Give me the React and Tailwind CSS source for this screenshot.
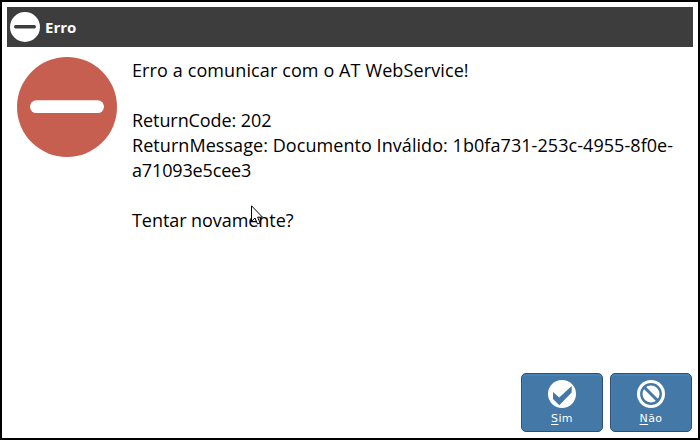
const lines = [
  { text: "Erro a comunicar com o AT WebService!", tracking: "tracking-[0.11px]" },
  { text: "\u00a0", tracking: "" },
  { text: "ReturnCode: 202", tracking: "tracking-[-0.08px]" },
  { text: "ReturnMessage: Documento Inválido: 1b0fa731-253c-4955-8f0e-", tracking: "tracking-[0.06px]" },
  { text: "a71093e5cee3", tracking: "tracking-[-0.15px]" },
  { text: "\u00a0", tracking: "" },
  { text: "Tentar novamente?", tracking: "tracking-[-0.06px]" },
];

function DialogButton({ accessKey, rest, children }) {
  return (
    <button className="flex h-[59px] w-[82px] flex-col items-center rounded-[5px] border border-[#2d506f] bg-[#4478a7] pt-[6px] shadow-[inset_0_2px_1px_#4383b8,inset_1px_0_1px_#4383b8] text-white">
      <svg width="28" height="28" viewBox="0 0 28 28">{children}</svg>
      <span className="mt-[3px] font-['DejaVu_Sans',sans-serif] text-[11px] leading-[15px] tracking-[0.4px]">
        <span className="underline decoration-1 underline-offset-2">{accessKey}</span>
        {rest}
      </span>
    </button>
  );
}

export default function App() {
  return (
    <div className="relative flex h-[440px] w-[700px] flex-col border-2 border-black bg-white px-[5px] pt-[5px]">
      <header className="flex h-10 shrink-0 items-center bg-[#3d3d3d] pl-[3px]">
        <svg width="30" height="30" viewBox="0 0 30 30">
          <circle cx="15" cy="15" r="15" fill="#fff" />
          <rect x="4" y="13" width="22" height="3.4" rx="1.7" fill="#3d3d3d" />
        </svg>
        <h1 className="ml-[5px] font-['Open_Sans','Noto_Sans',sans-serif] text-[15px] leading-5 font-bold text-white">Erro</h1>
      </header>
      <main className="flex flex-1 pt-[10px] pl-[10px]">
        <svg width="100" height="100" viewBox="0 0 100 100" className="shrink-0">
          <circle cx="50" cy="50" r="50" fill="#c65f4f" />
          <rect x="13" y="43.3" width="74" height="12.7" rx="6.3" fill="#fff" />
        </svg>
        <div className="ml-[15px] pt-px font-['Open_Sans','Noto_Sans',sans-serif] text-[18px] leading-[25px] whitespace-nowrap text-black">
          {lines.map((line, i) => (
            <p key={i} className={line.tracking}>{line.text}</p>
          ))}
        </div>
      </main>
      <footer className="mr-px flex shrink-0 justify-end gap-[7px] pb-[6px]">
        <DialogButton accessKey="S" rest="im">
          <circle cx="14" cy="14" r="14" fill="#fff" />
          <path d="M5 12 L11.2 17.4 L23.7 6 V12.5 L11.3 25.3 L5 19Z" fill="#4478a7" />
        </DialogButton>
        <DialogButton accessKey="N" rest="ão">
          <circle cx="14" cy="14" r="14" fill="#fff" />
          <circle cx="14" cy="14" r="9.7" fill="none" stroke="#4478a7" strokeWidth="2.4" />
          <path d="M7.5 7.5 L20.5 20.5" stroke="#4478a7" strokeWidth="3" />
        </DialogButton>
      </footer>
      <svg className="absolute top-[203px] left-[249px]" width="14" height="22" viewBox="0 0 14 22">
        <path d="M0.5 0.8 V16.3 L4 13 L6.5 19 L9 18 L6.6 12.2 H11.5Z" fill="#fff" stroke="#000" strokeWidth="1" />
      </svg>
    </div>
  );
}
